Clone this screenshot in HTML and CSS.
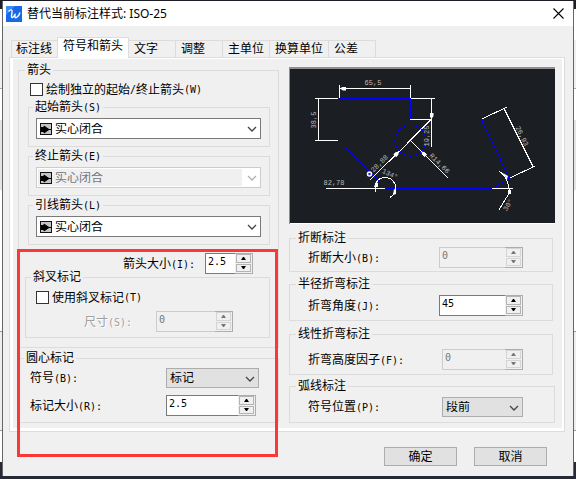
FILE: index.html
```html
<!DOCTYPE html>
<html lang="zh-CN">
<head>
<meta charset="utf-8">
<title>替代当前标注样式: ISO-25</title>
<link rel="stylesheet" href="styles.css">
</head>
<body>
<svg class="defs" aria-hidden="true">
  <symbol id="chevron" viewBox="0 0 10 6"><path d="M1 1l4 4 4-4" fill="none" stroke="currentColor" stroke-width="1.3"/></symbol>
  <symbol id="arrowhead" viewBox="0 0 12 12"><rect x=".5" y=".5" width="11" height="11" fill="#c4c4c4" stroke="#111"/><path d="M1 4h3v5H1z" fill="#000"/><path d="M1 6.500h10M4 3l5 3.500L4 10z" stroke="#000" fill="#000"/></symbol>
  <symbol id="up" viewBox="0 0 5 3"><path d="M0 3h5L3 0H2z" fill="currentColor"/></symbol>
  <symbol id="down" viewBox="0 0 5 3"><path d="M0 0h5L3 3H2z" fill="currentColor"/></symbol>
</svg>
<main class="dialog">
  <header class="titlebar">
    <svg class="logo" viewBox="0 0 16 16" aria-hidden="true"><rect width="16" height="16" fill="#1769e8"/><path d="M0 0h9L0 9z" fill="#3b8cf5"/><path d="M2.500 5.500C5 3 6.500 3.500 6 6.500S5 12 6.500 11.500 9.500 7 9 8.500s0 4 1.500 3 3-3 3.500-5" fill="none" stroke="#fff" stroke-width="1.400"/></svg>
    <h1>替代当前标注样式: ISO-25</h1>
    <button class="close" type="button" aria-label="关闭"><svg viewBox="0 0 11 11"><path d="M.5.5l10 10M10.500.5l-10 10" stroke="#000" stroke-width="1.100"/></svg></button>
  </header>
  <nav class="tabs" role="tablist">
    <button type="button" role="tab">标注线</button>
    <button type="button" role="tab" class="active" aria-selected="true">符号和箭头</button>
    <button type="button" role="tab">文字</button>
    <button type="button" role="tab">调整</button>
    <button type="button" role="tab">主单位</button>
    <button type="button" role="tab">换算单位</button>
    <button type="button" role="tab">公差</button>
  </nav>
  <section class="panel">
    <div class="col left">
      <fieldset class="arrows">
        <legend>箭头</legend>
        <label class="check"><input type="checkbox">绘制独立的起始<span class="key">/</span>终止箭头<span class="key">(W)</span></label>
        <fieldset class="sub">
          <legend><label for="start">起始箭头<span class="key">(S)</span></label></legend>
          <div class="combo"><svg class="pic"><use href="#arrowhead"/></svg><select id="start"><option>实心闭合</option></select><svg class="chev"><use href="#chevron"/></svg></div>
        </fieldset>
        <fieldset class="sub">
          <legend><label for="end">终止箭头<span class="key">(E)</span></label></legend>
          <div class="combo off"><svg class="pic"><use href="#arrowhead"/></svg><select id="end" disabled><option>实心闭合</option></select><svg class="chev"><use href="#chevron"/></svg></div>
        </fieldset>
        <fieldset class="sub">
          <legend><label for="leader">引线箭头<span class="key">(L)</span></label></legend>
          <div class="combo"><svg class="pic"><use href="#arrowhead"/></svg><select id="leader"><option>实心闭合</option></select><svg class="chev"><use href="#chevron"/></svg></div>
        </fieldset>
        <div class="row size">
          <label for="asize">箭头大小<span class="key">(I):</span></label>
          <div class="spin"><input id="asize" type="text" value="2.5"><div class="steps"><button type="button" aria-label="增加"><svg><use href="#up"/></svg></button><button type="button" aria-label="减少"><svg><use href="#down"/></svg></button></div></div>
        </div>
        <fieldset class="oblique">
          <legend>斜叉标记</legend>
          <label class="check"><input type="checkbox">使用斜叉标记<span class="key">(T)</span></label>
          <div class="row off">
            <label for="osize">尺寸<span class="key">(S):</span></label>
            <div class="spin off"><input id="osize" type="text" value="0" disabled><div class="steps"><button type="button" disabled aria-label="增加"><svg><use href="#up"/></svg></button><button type="button" disabled aria-label="减少"><svg><use href="#down"/></svg></button></div></div>
          </div>
        </fieldset>
      </fieldset>
      <fieldset class="center">
        <legend>圆心标记</legend>
        <div class="row">
          <label for="sym">符号<span class="key">(B):</span></label>
          <div class="combo flat"><select id="sym"><option>标记</option></select><svg class="chev"><use href="#chevron"/></svg></div>
        </div>
        <div class="row">
          <label for="msize">标记大小<span class="key">(R):</span></label>
          <div class="spin"><input id="msize" type="text" value="2.5"><div class="steps"><button type="button" aria-label="增加"><svg><use href="#up"/></svg></button><button type="button" aria-label="减少"><svg><use href="#down"/></svg></button></div></div>
        </div>
      </fieldset>
      <div class="mark"></div>
    </div>
    <div class="col right">
      <svg class="preview" viewBox="0 0 266 157" role="img" aria-label="标注预览">
        <defs><marker id="tip" viewBox="0 0 8 4" refX="8" refY="2" markerWidth="8" markerHeight="4" orient="auto-start-reverse"><path d="M8 2L5 0H2v4h3z" fill="#fff"/></marker></defs>
        <rect width="266" height="157" fill="#8e8e8e"/><rect x="1" y="2" width="265" height="155" fill="#1b1f24"/><path d="M1 156.500h265" stroke="#fff"/>
        <g fill="none" stroke="#00f" shape-rendering="crispEdges">
          <path d="M121.500 52V31.500h-71V73.500L96.500 121.500H203.500L220.500 111.500 192.500 52.500H142"/>
          <circle cx="121.500" cy="73.500" r="15.500"/>
        </g>
        <g fill="none" stroke="#fff" shape-rendering="crispEdges">
          <path d="M50.500 18v13M121.500 18v13M26 31.500h23M26 73.500h23M122 31.500h24M121 52.500h21M142.500 31v49M37 121.500h59M203 121.500h21M193 52l25-12M221 111l25-12"/>
          <path d="M51 21.500h70M29.500 32v41M215.500 42.500l28.500 57M142.500 32v20" marker-start="url(#tip)" marker-end="url(#tip)"/>
          <path d="M81 113L110 84.500" marker-end="url(#tip)"/><path d="M110 85l32-33"/><path d="M142 53l-9.500 9.500M159 111L132.500 84.500" marker-end="url(#tip)"/><path d="M121 73l12 12"/>
          <path d="M87 125C84 117 89 110.500 96 110.500S107 116 106.500 121.500 104 128 101 130.500"/>
          <path d="M210 104q10 6 10.500 22l-4 6-6.500 11"/>
        </g>
        <circle cx="80.500" cy="107" r="2" stroke="#fff" stroke-width="1.500" fill="#22f"/>
        <path d="M85 120l2-5 2 1v4zM104 128l1-6 2 1v4zM214 106l5 3-1 3zM219 123h3v4h-3z" fill="#fff"/>
        <g class="dims" text-anchor="middle">
          <text x="84" y="18">65,5</text><text x="45" y="118">82,78</text>
          <text transform="translate(27 53) rotate(-90)">38,5</text>
          <text transform="translate(92 98) rotate(-45)">28,88</text>
          <text transform="translate(100 109) rotate(25)">134°</text>
          <text transform="translate(140 69) rotate(-90)">19,25</text>
          <text transform="translate(149 98) rotate(45)">R14,66</text>
          <text transform="translate(231 70) rotate(64)">26,93</text>
          <text transform="translate(221 139) rotate(-60)">30°</text>
        </g>
      </svg>
      <fieldset class="break">
        <legend>折断标注</legend>
        <div class="row">
          <label for="bsize">折断大小<span class="key">(B):</span></label>
          <div class="spin off"><input id="bsize" type="text" value="0" disabled><div class="steps"><button type="button" disabled aria-label="增加"><svg><use href="#up"/></svg></button><button type="button" disabled aria-label="减少"><svg><use href="#down"/></svg></button></div></div>
        </div>
      </fieldset>
      <fieldset class="radius">
        <legend>半径折弯标注</legend>
        <div class="row">
          <label for="angle">折弯角度<span class="key">(J):</span></label>
          <div class="spin"><input id="angle" type="text" value="45"><div class="steps"><button type="button" aria-label="增加"><svg><use href="#up"/></svg></button><button type="button" aria-label="减少"><svg><use href="#down"/></svg></button></div></div>
        </div>
      </fieldset>
      <fieldset class="linear">
        <legend>线性折弯标注</legend>
        <div class="row">
          <label for="factor">折弯高度因子<span class="key">(F):</span></label>
          <div class="spin off"><input id="factor" type="text" value="0" disabled><div class="steps"><button type="button" disabled aria-label="增加"><svg><use href="#up"/></svg></button><button type="button" disabled aria-label="减少"><svg><use href="#down"/></svg></button></div></div>
        </div>
      </fieldset>
      <fieldset class="arc">
        <legend>弧线标注</legend>
        <div class="row">
          <label for="pos">符号位置<span class="key">(P):</span></label>
          <div class="combo flat"><select id="pos"><option>段前</option></select><svg class="chev"><use href="#chevron"/></svg></div>
        </div>
      </fieldset>
    </div>
  </section>
  <footer class="actions"><button type="button">确定</button><button type="button">取消</button></footer>
</main>
</body>
</html>
```
FILE: styles.css
```css
* { box-sizing: border-box; }

body {
  margin: 0;
  padding: 1px 2px 3px 2px;
  background: linear-gradient(#1d1e28 0 9px, #fff 9px 40px, #f0f0f0 40px 88px, #aaa 88px 89px, #fff 89px 120px, #e4e4e4 120px 190px, #fff 190px 331px, #999 331px 332px, #eee 332px 430px, #999 430px 431px, #fff 431px 462px, #252a35 462px);
  color: #000;
  font: 12px/12px "Liberation Sans", "Noto Sans CJK SC", sans-serif;
}

button, input, select {
  margin: 0;
  border-radius: 0;
  color: inherit;
  font: inherit;
}

.defs { display: none; }

.key { font: 10px/0 "DejaVu Sans Mono", monospace; }

.dialog {
  background: #f0f0f0;
  border: solid #666;
  border-width: 0 1px;
}

.titlebar {
  display: flex;
  align-items: center;
  gap: 5px;
  height: 25px;
  padding: 0 9px 0 3px;
  background: #fff;
}

.titlebar h1 {
  flex: 1;
  margin: 0;
  font: 12px/16px "Noto Sans", "Noto Sans CJK SC", sans-serif;
}

.logo { width: 16px; height: 16px; }

.close {
  display: flex;
  padding: 0;
  border: 0;
  background: none;
}

.close svg { width: 11px; height: 11px; }

.tabs {
  position: relative;
  z-index: 1;
  display: flex;
  align-items: flex-end;
  height: 31px;
  padding-left: 8px;
}

.tabs button {
  height: 17px;
  min-width: 47px;
  padding: 0 5px;
  border: solid #dcdcdc;
  border-width: 1px 1px 0 0;
  background: #f0f0f0;
  text-align: left;
}

.tabs button:first-child {
  min-width: 0;
  padding-left: 4px;
  border-width: 1px 0 0 1px;
}

.tabs .active {
  height: 21px;
  margin-bottom: -1px;
  padding: 0 5px 4px;
  border-width: 1px 1px 0;
  background: #fff;
}

.panel {
  display: grid;
  grid-template-columns: 261fr 266fr;
  gap: 10px;
  margin: 0 8px 0 6px;
  padding: 6px 9px 8px 8px;
  border: 1px solid #dcdcdc;
  box-shadow: inset 3px 0 #fff, inset -2px 0 #fff, inset 0 1px #fff, inset 0 -3px #fff;
}

.col { position: relative; min-width: 0; }

fieldset {
  min-width: 0;
  margin: 0;
  padding: 0;
  border: 1px solid #dcdcdc;
}

legend {
  height: 12px;
  margin-left: 6px;
  padding: 0 2px;
  line-height: 12px;
}

.left legend { margin-left: -3px; }
.left .center > legend { margin-left: -6px; }

.arrows { padding: 7px 8px 9px 9px; }

.check {
  display: flex;
  align-items: center;
  height: 13px;
  margin-left: 2px;
}

.check input {
  appearance: none;
  width: 13px;
  height: 13px;
  margin-right: 3px;
  border: 1px solid #333;
  background: #fff;
}

.sub { margin-top: 3px; padding: 5px 8px 7px 7px; }
.check + .sub { margin-top: 5px; }

.combo { position: relative; height: 21px; }

.combo select {
  appearance: none;
  display: block;
  width: 100%;
  height: 100%;
  padding: 0 20px 0 18px;
  border: 1px solid #7a7a7a;
  background: #fff;
}

.pic {
  position: absolute;
  top: 5px;
  left: 4px;
  width: 12px;
  height: 12px;
}

.chev {
  position: absolute;
  top: 8px;
  right: 4px;
  width: 10px;
  height: 6px;
  color: #444;
  pointer-events: none;
}

.combo.off select {
  border-color: #ccc;
  background: linear-gradient(#f0f0f0, #f0f0f0) 1px 1px / calc(100% - 19px) calc(100% - 2px) no-repeat #fff;
  color: #777;
  opacity: 1;
}

.combo.off .chev { color: #b0b0b0; }

.combo.flat { height: 20px; }

.combo.flat select {
  padding-left: 3px;
  border-color: #adadad;
  background: #e1e1e1;
}

.row { display: flex; align-items: center; }
.row label { flex: 1; white-space: nowrap; }
.row.off { color: #a0a0a0; text-shadow: 1px 1px #fff; }

.spin {
  display: flex;
  width: 84px;
  height: 21px;
}

.spin input {
  flex: 1;
  min-width: 0;
  padding: 0 0 3px 2px;
  border: 1px solid #7a7a7a;
  border-right: 0;
  background: #fff;
  font: 10px/12px "DejaVu Sans Mono", monospace;
}

.steps {
  display: flex;
  flex-direction: column;
  gap: 1px;
  width: 18px;
  padding: 0 1px 1px;
  border: solid #abadb3;
  border-width: 1px 1px 1px 0;
}

.steps button {
  display: flex;
  flex: 1;
  align-items: center;
  justify-content: center;
  padding: 0;
  border: 1px solid #b4b4b4;
  background: #f0f0f0;
}

.steps svg { width: 5px; height: 3px; }

.spin.off input {
  border-color: #ccc;
  background: #f0f0f0;
  color: #777;
}

.spin.off .steps button { border-color: #d4d4d4; color: #777; }

.size { margin: 8px 17px 0 95px; }
.size .spin { width: 48px; }

.oblique {
  margin: -3px 0 0 -3px;
  padding: 8px 36px 5px 8px;
}

.oblique .row { margin: 7px 0 0 50px; }
.oblique .spin { width: 77px; }

.center { margin-top: 4px; padding: 4px 19px 6px 11px; }
.center .combo { width: 93px; }
.center .spin { width: 90px; margin-right: 3px; }
.center .row + .row { margin-top: 7px; }

.mark {
  position: absolute;
  top: 185px;
  left: -1px;
  width: 100%;
  height: 208px;
  border: 3px solid #fb3838;
  pointer-events: none;
}

.preview {
  display: block;
  width: 100%;
  margin: 3px 0 8px;
}

.dims { fill: #bbb; font: 7px "Liberation Mono", monospace; }

.right fieldset { margin-right: 2px; }
.right .row { padding: 0 29px 0 18px; }
.break { padding: 3px 0; }
.right .radius { margin-top: 6px; padding: 5px 0 4px; }
.right .linear { margin-top: 7px; padding: 9px 0 4px; }
.linear .spin { width: 81px; }
.right .arc { margin: 5px 0 0; padding: 5px 2px 5px 0; }
.arc .combo { width: 81px; }

.actions {
  display: flex;
  justify-content: flex-end;
  gap: 17px;
  padding: 15px 26px 10px;
}

.actions button {
  width: 73px;
  height: 19px;
  padding: 0;
  border: 1px solid #adadad;
  background: #e1e1e1;
}
```
